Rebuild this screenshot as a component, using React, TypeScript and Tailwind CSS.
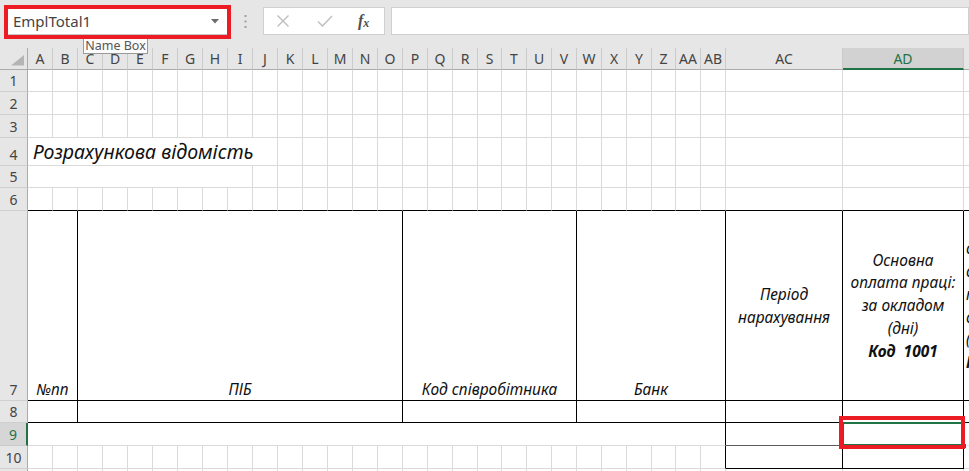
import React from "react";

const LETTERS = [
  "A","B","C","D","E","F","G","H","I","J","K","L","M","N","O","P","Q","R","S","T","U","V","W","X","Y","Z","AA","AB","AC","AD","AE",
];

const G = "border-r border-b border-r-[#dadada] border-b-[#dadada]";

function RowHead({ n, active }: { n: number; active?: boolean }) {
  return (
    <div
      className={
        active
          ? "flex items-end justify-center border-b border-b-[#c9c9c9] border-r-2 border-r-[#217346] bg-[#d6d6d6] text-[14px] leading-[21px] text-[#217346]"
          : "flex items-end justify-center border-b border-b-[#cfcfcf] border-r border-r-[#ababab] bg-[#e6e6e6] text-[14px] leading-[21px] text-[#444]"
      }
    >
      {n}
    </div>
  );
}

function Blank({ count }: { count: number }) {
  return (
    <>
      {Array.from({ length: count }).map((_, i) => (
        <div key={i} className={G} />
      ))}
    </>
  );
}

export default function App() {
  return (
    <div className="relative w-[969px] h-[471px] overflow-hidden bg-white font-['Noto_Sans',sans-serif]">
      {/* Toolbar / formula bar */}
      <div className="flex h-[48px] items-start bg-[#e6e6e6]">
        <div className="ml-[6px] mt-[7px] flex h-[28px] w-[223px] items-center justify-between border border-[#c6c6c6] bg-white pl-[6px] pr-[9px]">
          <span className="text-[15px] text-[#444]">EmplTotal1</span>
          <svg width="8" height="5" viewBox="0 0 8 5">
            <path d="M0 0 L8 0 L4 4.5 Z" fill="#6b6b6b" />
          </svg>
        </div>
        <svg className="ml-[15px] mt-[15px]" width="3" height="13" viewBox="0 0 3 13">
          <rect x="0.5" y="0" width="2" height="2" fill="#a0a0a0" />
          <rect x="0.5" y="5.5" width="2" height="2" fill="#a0a0a0" />
          <rect x="0.5" y="11" width="2" height="2" fill="#a0a0a0" />
        </svg>
        <div className="ml-[16px] mt-[7px] flex h-[28px] w-[122px] items-center border border-[#d0d0d0] bg-white pl-[13px]">
          <svg width="12" height="12" viewBox="0 0 12 12">
            <path d="M0.5 0.5 L11.5 11.5 M11.5 0.5 L0.5 11.5" stroke="#bdbdbd" strokeWidth="1.4" />
          </svg>
          <svg className="ml-[28px]" width="16" height="12" viewBox="0 0 16 12">
            <path d="M1 6.5 L5.5 11 L15 1" stroke="#c2c2c2" strokeWidth="1.6" fill="none" />
          </svg>
          <span className="ml-[25px] font-['Liberation_Serif',serif] text-[16px] font-bold italic leading-none text-[#505050]">
            f<span className="relative top-[1px] text-[12px]">x</span>
          </span>
        </div>
        <div className="ml-[6px] mt-[7px] h-[28px] flex-1 border border-[#d0d0d0] bg-white" />
      </div>

      {/* Sheet grid */}
      <div className="grid grid-cols-[28px_repeat(18,25px)_24px_repeat(6,25px)_24px_25px_25px_117px_121px_121px] grid-rows-[22px_22px_23px_23px_28px_22px_23px_190px_22px_23px_23px_23px]">
        {/* Column headers */}
        <div className="relative border-r border-b border-r-[#ababab] border-b-[#ababab] bg-[#e6e6e6]">
          <svg className="absolute left-[11px] top-[7px]" width="14" height="11" viewBox="0 0 14 11">
            <path d="M13 0 L13 10.5 L0 10.5 Z" fill="#b5b5b5" />
          </svg>
        </div>
        {LETTERS.map((l) =>
          l === "AD" ? (
            <div
              key={l}
              className="flex items-center justify-center border-r border-r-[#c8c8c8] border-b-2 border-b-[#217346] bg-[#d2d2d2] text-[14px] text-[#217346]"
            >
              {l}
            </div>
          ) : (
            <div
              key={l}
              className="flex items-center justify-center border-r border-b border-r-[#cbcbcb] border-b-[#ababab] bg-[#e6e6e6] text-[14px] text-[#444]"
            >
              {l}
            </div>
          )
        )}

        {/* Rows 1-3 */}
        <RowHead n={1} />
        <Blank count={31} />
        <RowHead n={2} />
        <Blank count={31} />
        <RowHead n={3} />
        <Blank count={31} />

        {/* Row 4 */}
        <RowHead n={4} />
        <div className={"col-span-10 flex items-end whitespace-nowrap pl-[5px] text-[19.5px] italic leading-[26px] text-[#111] " + G}>
          Розрахункова відомість
        </div>
        <Blank count={21} />

        {/* Row 5 */}
        <RowHead n={5} />
        <div className={"col-span-9 " + G} />
        <Blank count={22} />

        {/* Row 6 */}
        <RowHead n={6} />
        {Array.from({ length: 31 }).map((_, i) => (
          <div key={i} className="border-r border-b border-r-[#dadada] border-b-black" />
        ))}

        {/* Row 7 */}
        <RowHead n={7} />
        <div className="col-span-2 flex items-end justify-center border-r border-b border-r-black border-b-black pb-[1px] text-[15.5px] italic leading-[20px] text-[#111]">
          №пп
        </div>
        <div className="col-span-13 flex items-end justify-center border-r border-b border-r-black border-b-black pb-[1px] text-[15.5px] italic leading-[20px] text-[#111]">
          ПІБ
        </div>
        <div className="col-span-7 flex items-end justify-center border-r border-b border-r-black border-b-black pb-[1px] text-[15.5px] italic leading-[20px] text-[#111]">
          Код співробітника
        </div>
        <div className="col-span-6 flex items-end justify-center border-r border-b border-r-black border-b-black pb-[1px] text-[15.5px] italic leading-[20px] text-[#111]">
          Банк
        </div>
        <div className="flex flex-col items-center justify-center border-r border-b border-r-black border-b-black text-center text-[15.5px] italic leading-[22.7px] text-[#111]">
          <span>Період</span>
          <span>нарахування</span>
        </div>
        <div className="flex flex-col items-center justify-center border-r border-b border-r-black border-b-black text-center text-[15.5px] italic leading-[22.7px] text-[#111]">
          <span>Основна</span>
          <span>оплата праці:</span>
          <span>за окладом</span>
          <span>(дні)</span>
          <span className="whitespace-pre font-bold">Код  1001</span>
        </div>
        <div className="flex flex-col justify-center overflow-hidden whitespace-nowrap border-b border-b-black pl-[2px] text-[15.5px] italic leading-[22.7px] text-[#111]">
          <span>оплата праці</span>
          <span>оплата праці</span>
          <span>погодинна</span>
          <span>оплата</span>
          <span>(години)</span>
          <span className="font-bold">Код 1002</span>
        </div>

        {/* Row 8 */}
        <RowHead n={8} />
        <div className="col-span-2 border-r border-b border-r-black border-b-black" />
        <div className="col-span-13 border-r border-b border-r-black border-b-black" />
        <div className="col-span-7 border-r border-b border-r-black border-b-black" />
        <div className="col-span-6 border-r border-b border-r-black border-b-black" />
        <div className="border-r border-b border-r-black border-b-black" />
        <div className="border-r border-b border-r-black border-b-black" />
        <div className="border-b border-b-black" />

        {/* Row 9 */}
        <RowHead n={9} active />
        <div className="col-span-28 border-r border-b border-r-black border-b-[#dadada]" />
        <div className="border-r border-b border-r-black border-b-[#5c5c5c]" />
        <div className="relative border-r border-b border-r-black border-b-[#5c5c5c]">
          <div className="absolute -left-[1px] -right-[1px] -top-[1px] -bottom-[1px] border-2 border-[#217346]" />
          <div className="absolute -right-[4px] -bottom-[4px] h-[6px] w-[6px] border border-white bg-[#217346]" />
        </div>
        <div className={G} />

        {/* Row 10 */}
        <RowHead n={10} />
        <Blank count={27} />
        <div className="border-r border-b border-r-black border-b-[#dadada]" />
        <div className="border-r border-b border-r-black border-b-black" />
        <div className="border-r border-b border-r-black border-b-black" />
        <div className={G} />

        {/* Row 11 */}
        <RowHead n={11} />
        <Blank count={31} />
      </div>

      {/* Name Box tooltip */}
      <div className="absolute left-[83px] top-[38px] flex h-[16px] w-[65px] items-center justify-center whitespace-nowrap border border-[#9a9a9a] bg-[#fbfbfb] text-[12.5px] leading-none text-[#575757]">
        Name Box
      </div>

      {/* Red annotation frames */}
      <div className="absolute left-[4px] top-[5px] h-[34px] w-[227px] border-4 border-[#ec1c24]" />
      <div className="absolute left-[839px] top-[416px] h-[33px] w-[126px] border-4 border-[#ec1c24]" />
    </div>
  );
}
